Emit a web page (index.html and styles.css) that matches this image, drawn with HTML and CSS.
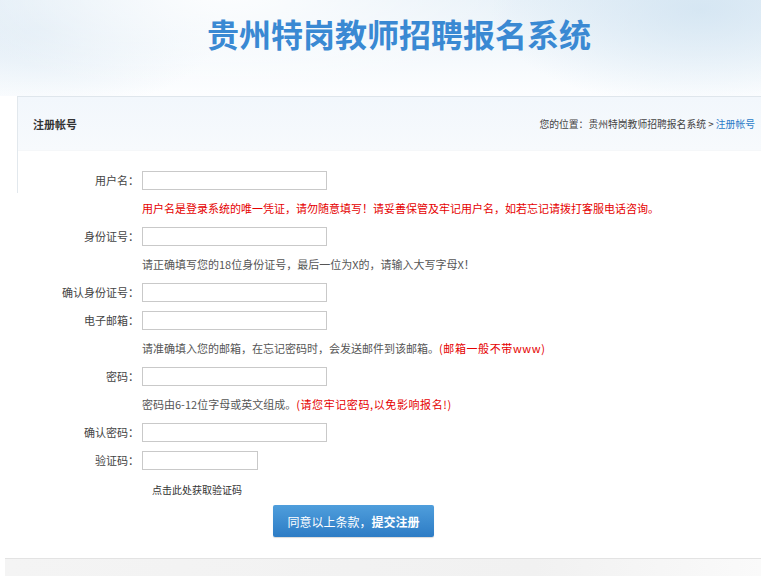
FILE: index.html
```html
<!DOCTYPE html>
<html lang="zh-CN">
<head>
    <meta charset="UTF-8">
    <title>注册帐号 - 贵州特岗教师招聘报名系统</title>
    <link rel="stylesheet" href="styles.css">
</head>
<body>
    <div class="top">
        <h1>贵州特岗教师招聘报名系统</h1>
    </div>

    <div class="panel">
        <div class="panel-head">
            <span class="panel-title">注册帐号</span>
            <span class="crumb">您的位置：贵州特岗教师招聘报名系统 &gt; <a href="#">注册帐号</a></span>
        </div>

        <form class="reg-form" onsubmit="return false;">
            <label class="lbl">用户名：</label>
            <div class="fld"><input type="text" class="ipt"></div>
            <span></span>
            <div class="tip red">用户名是登录系统的唯一凭证，请勿随意填写！请妥善保管及牢记用户名，如若忘记请拨打客服电话咨询。</div>

            <label class="lbl">身份证号：</label>
            <div class="fld"><input type="text" class="ipt"></div>
            <span></span>
            <div class="tip">请正确填写您的18位身份证号，最后一位为X的，请输入大写字母X！</div>

            <label class="lbl">确认身份证号：</label>
            <div class="fld"><input type="text" class="ipt"></div>

            <label class="lbl">电子邮箱：</label>
            <div class="fld"><input type="text" class="ipt"></div>
            <span></span>
            <div class="tip">请准确填入您的邮箱，在忘记密码时，会发送邮件到该邮箱。<span class="red">(邮箱一般不带www)</span></div>

            <label class="lbl">密码：</label>
            <div class="fld"><input type="password" class="ipt"></div>
            <span></span>
            <div class="tip">密码由6-12位字母或英文组成。<span class="red">(请您牢记密码,以免影响报名!)</span></div>

            <label class="lbl">确认密码：</label>
            <div class="fld"><input type="password" class="ipt"></div>

            <label class="lbl">验证码：</label>
            <div class="fld"><input type="text" class="ipt ipt-code"></div>
            <span></span>
            <div class="tip"><a href="#" class="get-code">点击此处获取验证码</a></div>
        </form>

        <div class="btn-row">
            <button class="btn-submit">同意以上条款，<b>提交注册</b></button>
        </div>
    </div>

    <div class="foot"></div>
</body>
</html>
```

FILE: styles.css
```css
body {
    margin: 0;
    background-color: #fff;
    font-family: "Noto Sans CJK SC", "Microsoft YaHei", sans-serif;
    font-size: 11px;
    color: #444;
}

a {
    text-decoration: none;
}

.top {
    height: 96px;
    background-color: #f3f8fc;
    background-image:
        radial-gradient(ellipse 420px 150px at 30% -10%, rgba(255, 255, 255, 0.9), rgba(255, 255, 255, 0) 70%),
        radial-gradient(ellipse 300px 140px at 92% 10%, rgba(205, 225, 240, 0.7), rgba(205, 225, 240, 0) 70%),
        radial-gradient(ellipse 260px 120px at 5% 30%, rgba(215, 230, 242, 0.6), rgba(215, 230, 242, 0) 70%),
        linear-gradient(#e9f2f9, #fdfeff);
    overflow: hidden;
}

.top h1 {
    margin: 0;
    padding: 13px 0 0 37px;
    text-align: center;
    font-size: 32px;
    line-height: 40px;
    font-weight: bold;
    color: #3a89d3;
}

.panel {
    position: relative;
    margin-left: 17px;
    border-top: 1px solid #dfe6ec;
}

.panel::before {
    content: "";
    position: absolute;
    left: 0;
    top: 0;
    width: 1px;
    height: 96px;
    background-color: #e2e8ed;
}

.panel-head {
    display: flex;
    justify-content: space-between;
    align-items: center;
    height: 53px;
    margin-left: 1px;
    padding: 0 6px 0 15px;
    background: linear-gradient(#f2f7fc, #f7fafd);
    border-bottom: 1px solid #f5f7f9;
}

.panel-title {
    font-size: 11px;
    font-weight: bold;
    color: #333;
}

.crumb {
    font-size: 9.8px;
    color: #444;
}

.crumb a {
    color: #2a7bc8;
}

.reg-form {
    display: grid;
    grid-template-columns: 125px auto;
    grid-auto-rows: 28px;
    align-items: center;
    margin: 0 0 0 -17px;
    padding: 15px 0 0 17px;
}

.lbl {
    text-align: right;
    padding-right: 3px;
    color: #444;
}

.fld {
    display: flex;
    align-items: center;
}

.ipt {
    box-sizing: border-box;
    width: 185px;
    height: 19px;
    margin: 0;
    padding: 0 3px;
    border: 1px solid #c9c9c9;
    background-color: #fff;
    outline: none;
}

.ipt-code {
    width: 116px;
}

.tip {
    color: #555;
    white-space: nowrap;
}

.red,
.tip.red {
    color: #e50000;
}

.tip .red {
    letter-spacing: 0.6px;
}

.get-code {
    display: inline-block;
    margin: 2px 0 0 10px;
    font-size: 10px;
    color: #333;
}

.btn-row {
    padding: 3px 0 0 256px;
}

.btn-submit {
    width: 161px;
    height: 32px;
    border: none;
    border-radius: 2px;
    background: linear-gradient(#4f9edc, #2d7cc5);
    color: #fff;
    font-family: inherit;
    font-size: 12px;
    cursor: pointer;
    box-shadow: 0 1px 1px rgba(0, 0, 0, 0.15);
}

.foot {
    margin: 21px 0 0 5px;
    height: 20px;
    border-top: 1px solid #e3e3e3;
    background: linear-gradient(90deg, #f4f4f4, #f1f1f1 70%, #fafafa);
}
```
